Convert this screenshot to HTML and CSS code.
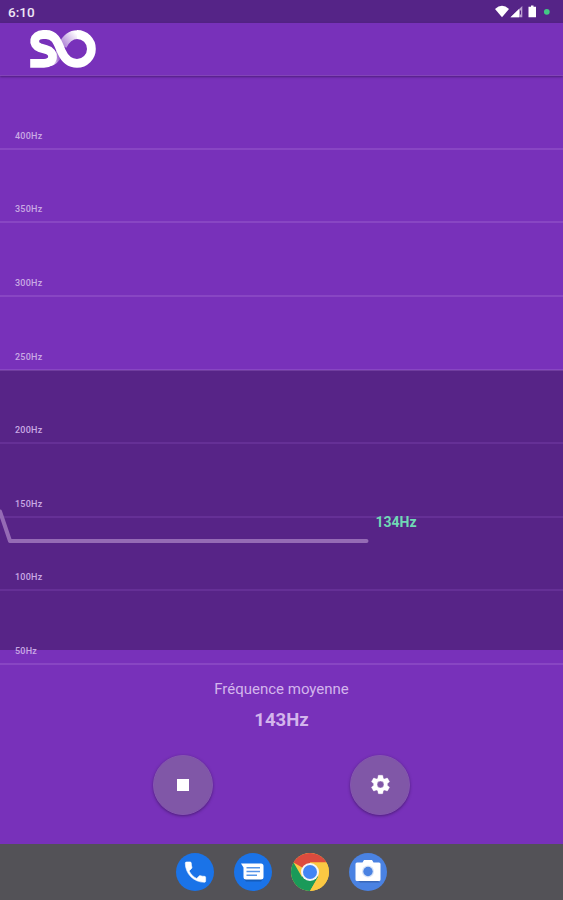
FILE: index.html
```html
<!DOCTYPE html>
<html lang="fr">
<head>
<meta charset="utf-8">
<title>SO</title>
<link rel="stylesheet" href="styles.css">
</head>
<body>
<div class="screen">
  <div class="status">
    <span class="clock">6:10</span>
    <svg class="status-icons" width="60" height="16" viewBox="0 0 60 16">
      <path d="M0 5Q7-1.500 14 5L7 13.2Z" fill="#fff"/>
      <path d="M15.5 13.3 27.3 2V13.3Z" fill="#b99fcf"/>
      <path d="M15.5 13.3 24 5V13.3Z" fill="#fff"/>
      <path d="M25 6.500h1v4h-1z" fill="#552487"/>
      <path d="M36 1.500h2.500v1.300H41v10.500h-7.500V2.800H36z" fill="#fff"/>
      <circle cx="51.800" cy="7.800" r="2.900" fill="#43c885"/>
    </svg>
  </div>
  <header class="bar">
    <svg class="logo" width="70" height="42" viewBox="28 28 70 42" fill="none" stroke-width="8.800">
      <defs>
        <linearGradient id="fade" gradientUnits="userSpaceOnUse" x1="62" y1="47" x2="77" y2="34">
          <stop offset="0" stop-color="#a879d3"/><stop offset="1" stop-color="#fff"/>
        </linearGradient>
        <linearGradient id="tail" gradientUnits="userSpaceOnUse" x1="51" y1="58" x2="60" y2="56">
          <stop offset="0" stop-color="#fff"/><stop offset="1" stop-color="#8a4ac4"/>
        </linearGradient>
      </defs>
      <path d="M52 55 58 49 62 56Q58 64 51 66Z" fill="url(#tail)"/>
      <path d="M77.300 34.700C70 34.700 65.500 39.500 62.500 46" stroke="url(#fade)"/>
      <path d="M30.200 63.300H44C54.500 63.300 55.500 52 46 49.500L40 47.800C31.500 45 33.500 34.500 43 34.500H46C56 34.500 58 44 61.500 51.500C65 59.500 70 63.300 77 63.300A14.400 14.400 0 0 0 77 34.500" stroke="#fff"/>
    </svg>
  </header>
  <main class="chart">
    <div class="row"><span>400Hz</span></div>
    <div class="row"><span>350Hz</span></div>
    <div class="row"><span>300Hz</span></div>
    <div class="row"><span>250Hz</span></div>
    <div class="row"><span>200Hz</span></div>
    <div class="row"><span>150Hz</span></div>
    <div class="row"><span>100Hz</span></div>
    <div class="row"><span>50Hz</span></div>
    <svg class="curve" width="370" height="40" viewBox="0 0 370 40">
      <path d="M0 5.500 10 35H366.500" fill="none" stroke="#956bb5" stroke-width="4" stroke-linejoin="round" stroke-linecap="round"/>
    </svg>
    <span class="current">134Hz</span>
  </main>
  <section class="summary">
    <div class="caption">Fréquence moyenne</div>
    <div class="average">143Hz</div>
    <div class="actions">
      <button class="round" aria-label="Stop"><svg width="12" height="12"><rect width="12" height="12" fill="#fff"/></svg></button>
      <button class="round" aria-label="Paramètres"><svg width="23" height="23" viewBox="0 0 24 24"><path fill="#fff" stroke="#fff" stroke-width=".4" d="M19.140 12.940c.04-.3.06-.61.06-.94s-.02-.64-.07-.94l2.030-1.580a.49.49 0 0 0 .12-.61l-1.920-3.320a.49.49 0 0 0-.59-.22l-2.390.96c-.5-.38-1.030-.7-1.620-.94l-.36-2.540A.48.48 0 0 0 13.920 2.400h-3.840c-.24 0-.43.17-.47.41l-.36 2.540c-.59.24-1.130.57-1.620.94l-2.390-.96a.49.49 0 0 0-.59.22L2.740 8.870a.48.48 0 0 0 .12.61l2.030 1.580c-.05.3-.09.63-.09.94s.02.64.07.94l-2.030 1.580a.49.49 0 0 0-.12.61l1.920 3.320c.12.22.37.29.59.22l2.390-.96c.5.38 1.030.7 1.620.94l.36 2.540c.05.24.24.41.48.41h3.840c.24 0 .44-.17.47-.41l.36-2.540c.59-.24 1.130-.56 1.620-.94l2.390.96c.22.08.47 0 .59-.22l1.920-3.320a.48.48 0 0 0-.12-.61zM12 15.600A3.600 3.600 0 1 1 12 8.400a3.600 3.600 0 0 1 0 7.200z"/></svg></button>
    </div>
  </section>
  <nav class="dock">
    <svg width="38" height="38" viewBox="0 0 38 38">
      <circle cx="19" cy="19" r="19" fill="#1a73e8"/>
      <path transform="translate(5.500 5.500) scale(1.150)" fill="#fff" stroke="#fff" stroke-width=".5" stroke-linejoin="round" d="M6.620 10.790c1.440 2.830 3.760 5.140 6.590 6.590l2.200-2.200c.27-.27.67-.36 1.020-.24 1.120.37 2.330.57 3.570.57.55 0 1 .45 1 1V19.400c0 .9-.45 1.300-1 1.300C10.610 20.700 3.300 13.390 3.300 4c0-.55.4-1 1.200-1h3c.55 0 1 .45 1 1 0 1.250.2 2.450.57 3.570.11.35.03.74-.25 1.020z"/>
    </svg>
    <svg width="38" height="38" viewBox="0 0 38 38">
      <circle cx="19" cy="19" r="19" fill="#1a73e8"/>
      <path d="M10 26h19l-2 2.500H12z" fill="#155cb9"/>
      <path d="M7 10.500H27Q29.500 10.500 29.500 13V24Q29.500 26.500 27 26.500H12Q9.500 26.500 9.500 24V14.500Z" fill="#fff"/>
      <path d="M12.500 14.800H26M12.500 18.500H26M12.500 22.200H23" stroke="#5795e8" stroke-width="1.500"/>
    </svg>
    <svg width="38" height="38" viewBox="0 0 38 38">
      <circle cx="19" cy="19" r="19" fill="#fbc843"/>
      <path d="M19 19 2.550 9.500A19 19 0 0 1 35.450 9.500H19Z" fill="#dc4b3e"/>
      <path d="M2.550 9.500A19 19 0 0 0 19 38L27.230 23.750 19 19 10.770 23.750Z" fill="#1a9a59"/>
      <path d="M35.450 9.500H19L27.230 23.750 19 38A19 19 0 0 0 35.450 9.500Z" fill="#fbc843"/>
      <circle cx="19" cy="19" r="9" fill="#f5f5f5"/>
      <circle cx="19" cy="19" r="7" fill="#4285f4"/>
    </svg>
    <svg width="38" height="38" viewBox="0 0 38 38">
      <circle cx="19" cy="19" r="19" fill="#4a82e2"/>
      <path d="M9 28h20l2 1.500H11z" fill="#3967b8"/>
      <path d="M8 9.500h5.500L15 7h8l1.500 2.500H30a1.500 1.500 0 0 1 1.500 1.500V26.500a1.500 1.500 0 0 1-1.500 1.500H8A1.500 1.500 0 0 1 6.500 26.500V11A1.500 1.500 0 0 1 8 9.500Z" fill="#fff"/>
      <circle cx="19" cy="18.500" r="6" fill="#d9e4f7"/>
      <circle cx="19" cy="18.500" r="4.700" fill="#4a82e2"/>
    </svg>
  </nav>
</div>
</body>
</html>
```
FILE: styles.css
```css
* { box-sizing: border-box; }
body { margin: 0; font-family: Roboto, "Liberation Sans", sans-serif; }
.screen {
  width: 563px;
  height: 900px;
  display: flex;
  flex-direction: column;
  background: #7831ba;
  overflow: hidden;
}
.status {
  height: 23px;
  flex: none;
  display: flex;
  align-items: center;
  justify-content: space-between;
  padding: 1px 8px 0 8px;
  background: #552487;
}
.clock { color: #eee6f5; font-size: 13.500px; font-weight: 500; line-height: 22px; }
.status-icons { display: block; }
.bar {
  height: 53px;
  flex: none;
  padding: 5px 28px;
  border-bottom: 1px solid #8244b8;
  box-shadow: 0 1px 2px rgba(50, 15, 85, .6);
}
.logo { display: block; }
.chart {
  position: relative;
  height: 589px;
  flex: none;
  display: grid;
  grid-template-rows: repeat(8, 1fr);
  background: linear-gradient(transparent 294.500px, #572487 294.500px, #572487 574px, transparent 574px);
}
.row {
  display: flex;
  align-items: flex-end;
  padding: 0 15px 7px;
  border-bottom: 2px solid rgba(181, 131, 222, .27);
}
.row:nth-child(n+5):nth-child(-n+7) { border-bottom-color: rgba(160, 100, 210, .2); }
.row span { font-size: 9px; line-height: 10px; letter-spacing: .25px; color: #c9a9e4; font-weight: 500; }
.curve { position: absolute; left: 0; top: 430px; }
.current {
  position: absolute;
  left: 375.500px;
  top: 438px;
  font-size: 14px;
  line-height: 17px;
  font-weight: 700;
  color: #70d8b5;
}
.summary { height: 179px; flex: none; text-align: center; color: #d3b5ec; }
.caption { padding-top: 15px; font-size: 15px; line-height: 18px; }
.average { margin-top: 11px; font-size: 18.500px; line-height: 22px; font-weight: 700; }
.actions { display: flex; justify-content: center; gap: 137px; margin-top: 23.500px; }
.round {
  width: 60px;
  height: 60px;
  display: flex;
  align-items: center;
  justify-content: center;
  padding: 0;
  border: 1px solid #8656b1;
  border-radius: 50%;
  background: #8057a7;
  box-shadow: 0 1px 3px rgba(55, 20, 90, .65);
}
.dock {
  height: 56px;
  flex: none;
  display: flex;
  align-items: center;
  justify-content: center;
  gap: 19.600px;
  background: #535257;
}
```
